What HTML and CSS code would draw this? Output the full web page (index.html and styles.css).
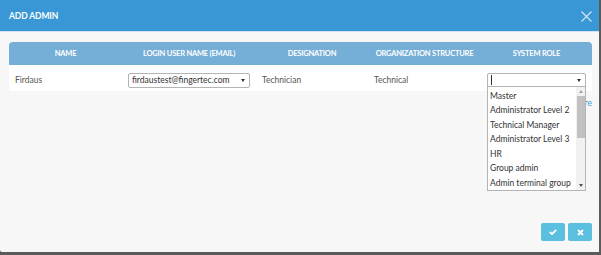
FILE: index.html
```html
<!DOCTYPE html>
<html lang="en">
<head>
  <meta charset="UTF-8" />
  <title>Add Admin</title>
  <link rel="stylesheet" href="styles.css">
</head>
<body>
  <div class="modal">
    <div class="modal-header">
      <h4>ADD ADMIN</h4>
      <span class="close">
        <svg width="11" height="11" viewBox="0 0 11 11"><path d="M0.5 0.5L10.5 10.5M10.5 0.5L0.5 10.5" stroke="#d6e8f5" stroke-width="1.1" fill="none"/></svg>
      </span>
    </div>

    <div class="modal-body">
      <div class="admin-table">
        <div class="thead">
          <div>NAME</div>
          <div>LOGIN USER NAME (EMAIL)</div>
          <div>DESIGNATION</div>
          <div>ORGANIZATION STRUCTURE</div>
          <div>SYSTEM ROLE</div>
        </div>
        <div class="trow">
          <div class="cell">Firdaus</div>
          <div class="cell">
            <div class="combo email"><span>firdaustest@fingertec.com</span><i class="caret"></i></div>
          </div>
          <div class="cell">Technician</div>
          <div class="cell">Technical</div>
          <div class="cell role-cell">
            <div class="combo role"><span class="text-cursor"></span><i class="caret"></i></div>
            <div class="options">
              <ul>
                <li>Master</li>
                <li>Administrator Level 2</li>
                <li>Technical Manager</li>
                <li>Administrator Level 3</li>
                <li>HR</li>
                <li>Group admin</li>
                <li>Admin terminal group</li>
              </ul>
              <div class="scrollbar">
                <i class="arrow up"></i>
                <div class="track"><div class="thumb"></div></div>
                <i class="arrow down"></i>
              </div>
            </div>
          </div>
        </div>
      </div>
      <div class="more-line"><a href="#">Add More</a></div>
    </div>

    <div class="modal-footer">
      <button class="btn">
        <svg width="8" height="6" viewBox="0 0 8 6"><path d="M0.8 3L3 5.1L7.2 0.9" stroke="#fff" stroke-width="1.8" fill="none"/></svg>
      </button>
      <button class="btn">
        <svg width="7" height="7" viewBox="0 0 7 7"><path d="M1 1L6 6M6 1L1 6" stroke="#fff" stroke-width="1.8" fill="none"/></svg>
      </button>
    </div>
  </div>
</body>
</html>
```

FILE: styles.css
```css
body {
  margin: 0;
  background-color: #5a5a5a;
  font-family: Lato, 'Open Sans', sans-serif;
  font-size: 8.5px;
  color: #555;
}

.modal {
  width: 599px;
  height: 252px;
  background-color: #f7f7f7;
  display: flex;
  flex-direction: column;
  border-bottom-left-radius: 2px;
}

.modal-header {
  height: 31px;
  background-color: #3897d4;
  border-bottom: 1px solid #cfe2f0;
  display: flex;
  align-items: center;
  justify-content: space-between;
  padding: 0 7px 0 9px;
}

.modal-header h4 {
  margin: 0;
  color: #fff;
  font-size: 8.5px;
  font-weight: bold;
  letter-spacing: -0.1px;
}

.close {
  display: flex;
  margin-top: 1px;
}

.modal-body {
  padding: 10px 7px 0 9px;
  flex: 1;
}

.admin-table {
  width: 583px;
}

.thead,
.trow {
  display: grid;
  grid-template-columns: 113px 134px 112px 113px 111px;
}

.thead {
  height: 23px;
  background-color: #75aed6;
  border-radius: 4px 4px 0 0;
}

.thead div {
  color: #fff;
  font-weight: bold;
  font-size: 7.5px;
  letter-spacing: -0.2px;
  text-align: center;
  line-height: 24px;
  white-space: nowrap;
}

.trow {
  height: 26px;
  background-color: #fff;
}

.cell {
  padding: 4px 6px 0;
  display: flex;
  align-items: center;
  white-space: nowrap;
}

.combo {
  height: 13px;
  border: 1px solid #b4b4b4;
  border-radius: 2px;
  background-color: #fff;
  display: flex;
  align-items: center;
  justify-content: space-between;
  padding: 0 4px 0 3px;
  color: #333;
}

.combo.email {
  width: 114px;
}

.combo.role {
  width: 91px;
}

.caret {
  width: 0;
  height: 0;
  border-left: 2.5px solid transparent;
  border-right: 2.5px solid transparent;
  border-top: 3px solid #333;
}

.text-cursor {
  width: 1px;
  height: 10px;
  background-color: #333;
}

.role-cell {
  position: relative;
}

.options {
  position: absolute;
  top: 21px;
  left: 6px;
  width: 97px;
  height: 103px;
  border: 1px solid #b4b4b4;
  background-color: #fff;
  display: flex;
  z-index: 2;
}

.options ul {
  list-style: none;
  margin: 0;
  padding: 1.5px 0 0 2px;
  flex: 1;
  color: #333;
  white-space: nowrap;
  overflow: hidden;
}

.options li {
  height: 14.5px;
  line-height: 15px;
}

.scrollbar {
  width: 9px;
  display: flex;
  flex-direction: column;
  align-items: center;
  background-color: #f1f1f1;
}

.track {
  flex: 1;
  width: 8px;
}

.thumb {
  height: 42px;
  background-color: #c1c1c1;
}

.arrow {
  width: 0;
  height: 0;
  margin: 3px 0;
  border-left: 2.5px solid transparent;
  border-right: 2.5px solid transparent;
}

.arrow.up {
  border-bottom: 3px solid #a3a3a3;
}

.arrow.down {
  border-top: 3px solid #505050;
}

.more-line {
  text-align: right;
  margin-top: 7px;
  line-height: 11px;
}

.more-line a {
  color: #3a97d4;
  text-decoration: none;
}

.modal-footer {
  display: flex;
  justify-content: flex-end;
  gap: 3px;
  padding: 0 7px 11px 0;
}

.btn {
  width: 24px;
  height: 18px;
  border: none;
  border-radius: 2px;
  background-color: #5bbfdf;
  display: flex;
  align-items: center;
  justify-content: center;
  padding: 0;
}
```
